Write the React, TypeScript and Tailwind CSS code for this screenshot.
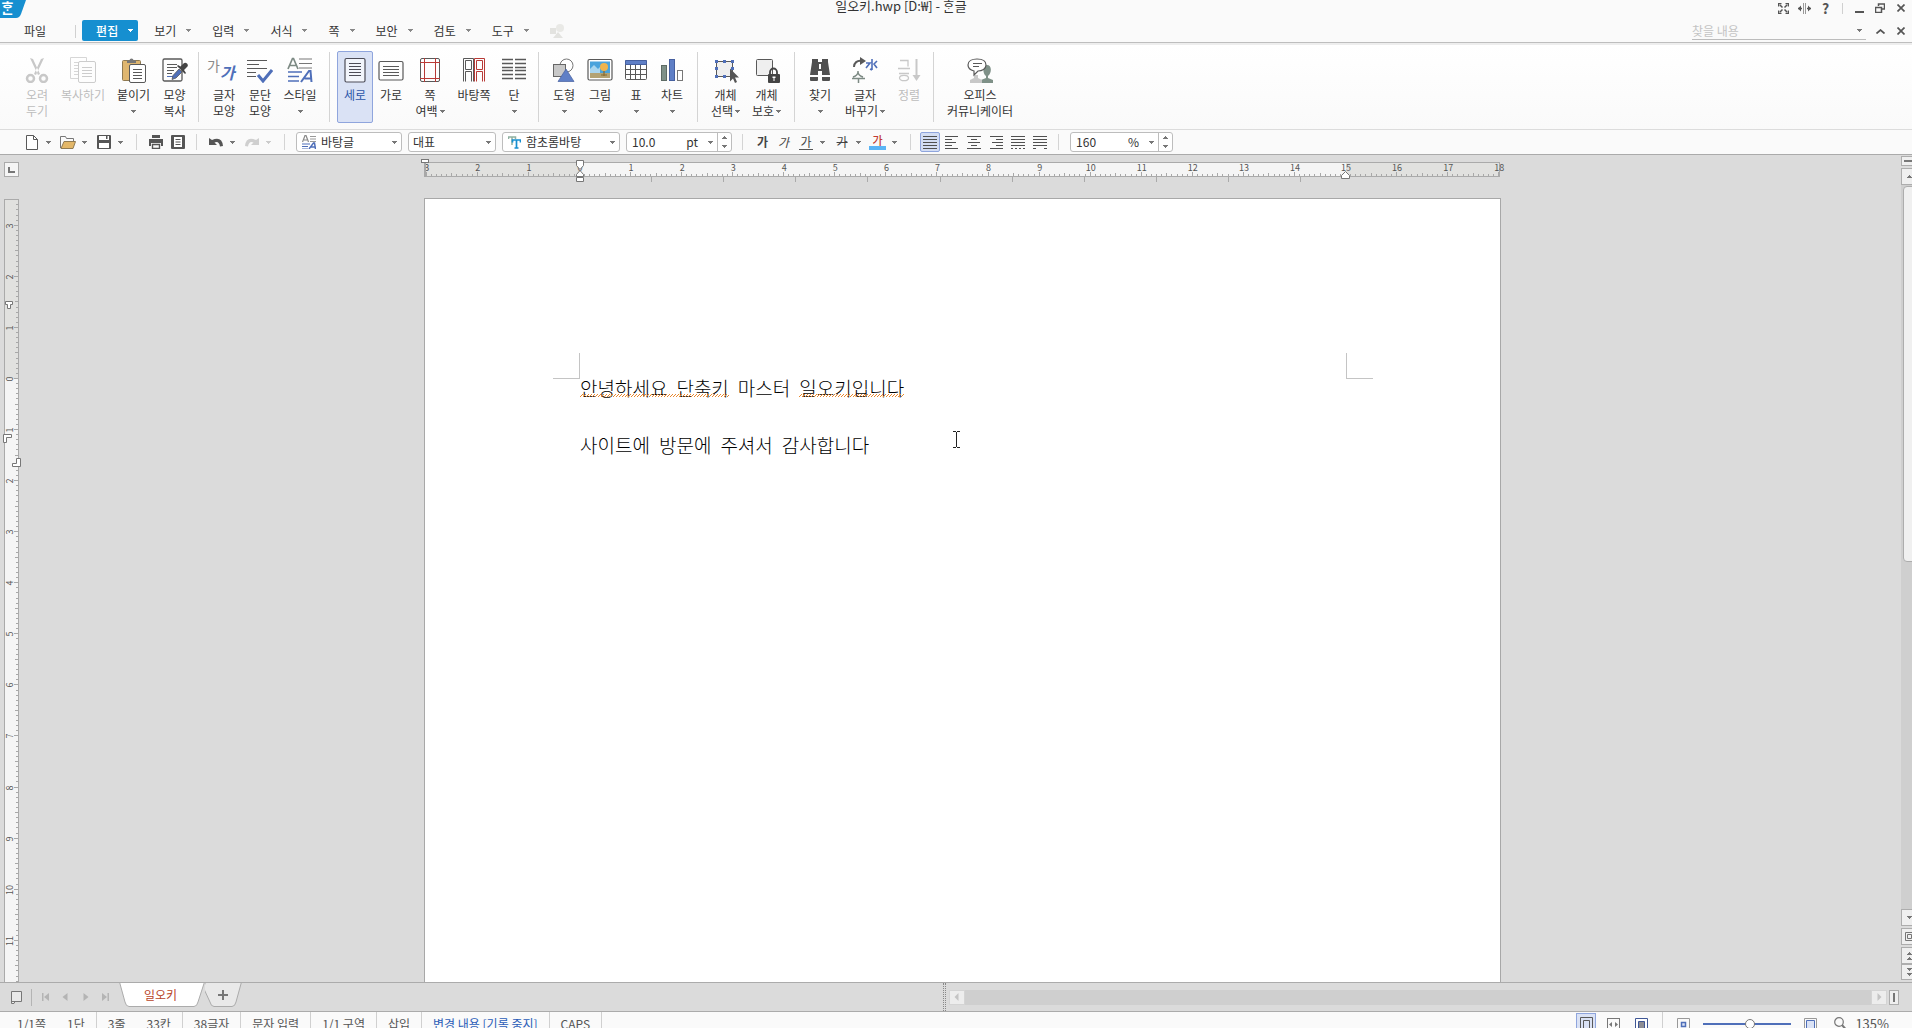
import React from "react";

type IconProps = { children: React.ReactNode; w?: number; h?: number; className?: string };

function Svg({ children, w = 26, h = 26, className = "" }: IconProps) {
  return (
    <svg
      width={w}
      height={h}
      viewBox={`0 0 ${w} ${h}`}
      fill="none"
      aria-hidden="true"
      className={`block shrink-0 ${className}`}
    >
      {children}
    </svg>
  );
}

function Caret({ className = "text-[#777777]" }: { className?: string }) {
  return (
    <svg width="5" height="3" viewBox="0 0 5 3" aria-hidden="true" className={`block shrink-0 ${className}`} shapeRendering="crispEdges">
      <path d="M0 0h5v1H0zM1 1h3v1H1zM2 2h1v1H2z" fill="currentColor" />
    </svg>
  );
}

function CaretUp() {
  return (
    <svg width="5" height="3" viewBox="0 0 5 3" aria-hidden="true" className="block shrink-0 text-[#777777]" shapeRendering="crispEdges">
      <path d="M2 0h1v1H2zM1 1h3v1H1zM0 2h5v1H0z" fill="currentColor" />
    </svg>
  );
}

const G = "#595959";
const B = "#4f6fb9";
const R = "#b83a36";
const L = "#c8c8c8";

const icons = {
  cut: (
    <Svg>
      <path d="M6 1l3 1 7 15-2 1zM20 1l-3 1-7 15 2 1z" fill={L} />
      <circle cx="6.500" cy="21.500" r="3.500" stroke={L} strokeWidth="2.500" />
      <circle cx="19.500" cy="21.500" r="3.500" stroke={L} strokeWidth="2.500" />
    </Svg>
  ),
  copy: (
    <Svg>
      <path d="M8 21.500H.5V.5h16V4" stroke="#d6d6d6" />
      <path d="M4 5.500h5M4 8.500h4M4 11.500h4M4 14.500h4M4 17.500h4" stroke="#d6d6d6" />
      <rect x="8.500" y="4.500" width="17" height="21" rx="1.500" stroke="#cccccc" fill="#fdfdfd" />
      <path d="M12 10.500h10M12 13.500h10M12 16.500h10M12 19.500h10" stroke="#cccccc" />
    </Svg>
  ),
  paste: (
    <Svg>
      <rect x="1.500" y="3.500" width="18" height="20" rx="1" fill="#dfb66f" stroke="#8f7a52" />
      <path d="M6 6V3.500h2.500a2 2 0 0 1 4 0H15V6z" fill="#777" />
      <rect x="8.500" y="7.500" width="16" height="18" rx="1.500" fill="#fff" stroke={G} />
      <path d="M12 12.500h9M12 15.500h9M12 18.500h9M12 21.500h9" stroke={G} />
    </Svg>
  ),
  format: (
    <Svg>
      <rect x="1" y="2" width="19" height="22" rx="1.500" stroke={G} strokeWidth="1.300" />
      <path d="M5 7.500h10M5 10.500h10M5 13.500h7M5 16.500h5" stroke={G} />
      <path d="M5 19.500h6" stroke={B} />
      <path d="M17 12l3 3-6 6-4 1.500 1-4z" fill={B} stroke={G} strokeWidth=".8" />
      <path d="M15 9l8 8 1-1-2-3 3-3a2.300 2.300 0 0 0-3.500-3.500l-3 3-2.500-1.500z" fill="#444" />
    </Svg>
  ),
  para: (
    <Svg>
      <path d="M0 3.500h20M0 7.500h12M0 11.500h20M0 15.500h9M0 19.500h9" stroke={G} strokeWidth="1.200" />
      <path d="M11 18l5 6 9-11" stroke={B} strokeWidth="3" />
    </Svg>
  ),
  style: (
    <Svg>
      <path d="M1 12L5.500 1.500h1L11 12M3 8.500h6" stroke="#7d8a84" strokeWidth="1.700" />
      <path d="M12 2h13M12 6.500h13M12 11h13" stroke="#777" strokeWidth="1.200" />
      <path d="M1 15h14M1 19.500h11M1 24h11" stroke={B} strokeWidth="1.300" />
      <path d="M14 25l8-11h1.500l1 11M17.500 21.500h7" stroke={B} strokeWidth="2" />
    </Svg>
  ),
  portrait: (
    <Svg>
      <rect x="3" y="1.500" width="20" height="23.500" rx="1.500" stroke="#4d4d58" strokeWidth="1.200" fill="#f2f5fc" />
      <path d="M7 6.500h12M7 9.500h12M7 12.500h12M7 15.500h12M7 18.500h12" stroke="#4d4d58" />
    </Svg>
  ),
  landscape: (
    <Svg>
      <rect x="1" y="4.500" width="24" height="18.500" rx="1.500" stroke={G} strokeWidth="1.200" />
      <path d="M5 9.500h16M5 12.500h16M5 15.500h16M5 18.500h16" stroke={G} />
    </Svg>
  ),
  margin: (
    <Svg>
      <rect x="3.500" y="1.500" width="19" height="23" rx="1.500" stroke={G} />
      <path d="M7.500 1v24M18.500 1v24M3 5.500h20M3 21.500h20" stroke={R} />
    </Svg>
  ),
  master: (
    <Svg>
      <path d="M2.500 24.500V1.500h10v23M4.500 3.500h6v9h-6zM4.500 24.500v-10h6v10" stroke={G} />
      <path d="M13.500 24.500V1.500h10v23M15.500 3.500h6v9h-6zM15.500 24.500v-10h6v10" stroke={R} />
    </Svg>
  ),
  columns: (
    <Svg>
      <path
        d="M1 2.500h11M1 6.500h11M1 10.500h11M1 13.500h11M1 17.500h11M1 21.500h11M14 2.500h11M14 6.500h11M14 10.500h11M14 13.500h11M14 17.500h11M14 21.500h11"
        stroke={G}
        strokeWidth="1.300"
      />
    </Svg>
  ),
  shapes: (
    <Svg>
      <circle cx="15.500" cy="8.500" r="6.500" stroke="#777" fill="#fff" />
      <rect x="2.500" y="7.500" width="12" height="12" fill="#c8c8c8" stroke="#666" />
      <path d="M15 12l8 12.500H7z" fill="#5f7fc6" stroke="#46609f" strokeWidth=".7" />
    </Svg>
  ),
  picture: (
    <Svg>
      <rect x="1" y="2.500" width="24" height="20.500" rx="1.500" fill="#fff" stroke={G} strokeWidth="1.200" />
      <path d="M3 4.500h20v12H3z" fill="#4aa3dc" />
      <path d="M3 12l4-4 4 4 2-2v7H3z" fill="#a9d5ee" />
      <path d="M3 16h20v5H3z" fill="#b3a273" />
      <circle cx="17" cy="10" r="4" fill="#f0b44c" />
      <path d="M17 14v5M14 18h6" stroke="#8a6a2a" strokeWidth="1.200" />
    </Svg>
  ),
  table: (
    <Svg>
      <rect x="2.500" y="3.500" width="21" height="19" rx="1" fill="#fff" stroke={G} />
      <path d="M2.500 3.500h21v4h-21z" fill="#5f7fc6" stroke="#46609f" />
      <path d="M2 12.500h22M2 17.500h22M7.500 8v14M12.500 8v14M17.500 8v14" stroke={G} />
    </Svg>
  ),
  chart: (
    <Svg>
      <rect x="2.500" y="8.500" width="5" height="15" fill="#7f9188" stroke="#5e6b64" />
      <rect x="10.500" y="2.500" width="5" height="21" fill="#5f7fc6" stroke="#46609f" />
      <rect x="18.500" y="13.500" width="5" height="10" fill="#fff" stroke="#777" />
    </Svg>
  ),
  select: (
    <Svg>
      <rect x="3.500" y="4.500" width="16" height="15" fill="#efefef" stroke={G} />
      <path d="M2 3h3v3H2zM10 3h3v3h-3zM18 3h3v3h-3zM2 10h3v3H2zM2 18h3v3H2zM10 18h3v3h-3zM18 10h3v3h-3z" fill={B} />
      <path d="M17 11.500v13l3-3 2 4.500 2-1-2-4.500h4z" fill="#555" />
    </Svg>
  ),
  protect: (
    <Svg>
      <rect x="2.500" y="2.500" width="16" height="16" rx="1" fill="#efefef" stroke={G} />
      <path d="M16 17v-2a3.500 3.500 0 0 1 7 0v2" stroke="#444" strokeWidth="1.800" />
      <rect x="14" y="17" width="12" height="9" rx="1" fill="#444" />
      <path d="M18.500 19.500h3v1.500h-1v3h-1v-3h-1z" fill="#fff" />
    </Svg>
  ),
  find: (
    <Svg>
      <path d="M5 2h6v3h4V2h6v3l2 13h-8v-4h-4v4H3L5 5z" fill="#505050" />
      <path d="M3 20h8v3a1 1 0 0 1-1 1H4a1 1 0 0 1-1-1zM15 20h8v3a1 1 0 0 1-1 1h-6a1 1 0 0 1-1-1z" fill="#505050" />
      <path d="M12 7h2v5h-2z" fill="#fff" />
    </Svg>
  ),
  replace: (
    <Svg>
      <path d="M2 10c0-4 3-7 8-6" stroke={G} strokeWidth="2" />
      <path d="M8 0l6 4-6 4z" fill={G} />
      <path d="M20 2v11M14 6h4l-4 5M25 4l-3 3 3 4M20 13l-2-1" stroke={B} strokeWidth="1.600" />
      <path d="M6 14v1c0 2-2 4-5 5M6 15c0 2 2 4 5 5M0 21.500h13M6.500 21v5" stroke="#7d8a84" strokeWidth="1.500" />
    </Svg>
  ),
  sort: (
    <Svg>
      <path d="M4 3.500h8v6M2 11.500h12M3 16.500h10" stroke={L} strokeWidth="1.300" />
      <ellipse cx="8" cy="21" rx="4.500" ry="2.700" stroke={L} strokeWidth="1.300" />
      <path d="M20.500 2v17" stroke={L} strokeWidth="2" />
      <path d="M16.500 18h8l-4 6z" fill={L} />
    </Svg>
  ),
  office: (
    <Svg>
      <path d="M14 26v-3l5-2v-2c-4-3-3-11 1-11 5 0 5 8 1 11v2l5 2v3z" fill="#7f9188" />
      <path d="M3 26v-3l4-2v-3h4v3l4 2v3z" fill={L} />
      <path d="M10 2c5 0 9 2 9 6s-4 6-8 6l-4 4v-4c-4-1-6-3-6-6 0-4 4-6 9-6z" fill="#fff" stroke={G} strokeWidth="1.200" />
      <path d="M6 6.500h9M6 9.500h6" stroke={G} />
    </Svg>
  ),
};

type RibbonItem = {
  icon: React.ReactNode;
  lines: string[];
  width: string;
  arrow?: boolean;
  disabled?: boolean;
  active?: boolean;
};

const letterIcon = (
  <span className="relative block h-[26px] w-[26px]" aria-hidden="true">
    <span className="absolute -left-1 top-0 text-[14px] leading-4 text-[#8a8a8a]">가</span>
    <span className="absolute left-[9px] top-[7px] text-[16px] font-bold italic leading-4 text-[#4f6fb9]">가</span>
  </span>
);

const ribbon: RibbonItem[][] = [
  [
    { icon: icons.cut, lines: ["오려", "두기"], width: "w-10", disabled: true },
    { icon: icons.copy, lines: ["복사하기"], width: "w-[52px]", disabled: true },
    { icon: icons.paste, lines: ["붙이기"], width: "w-[49px]", arrow: true },
    { icon: icons.format, lines: ["모양", "복사"], width: "w-[33px]" },
  ],
  [
    { icon: letterIcon, lines: ["글자", "모양"], width: "w-9" },
    { icon: icons.para, lines: ["문단", "모양"], width: "w-9" },
    { icon: icons.style, lines: ["스타일"], width: "w-11", arrow: true },
  ],
  [
    { icon: icons.portrait, lines: ["세로"], width: "w-9", active: true },
    { icon: icons.landscape, lines: ["가로"], width: "w-9" },
    { icon: icons.margin, lines: ["쪽", "여백"], width: "w-[42px]", arrow: true },
    { icon: icons.master, lines: ["바탕쪽"], width: "w-[46px]" },
    { icon: icons.columns, lines: ["단"], width: "w-[34px]", arrow: true },
  ],
  [
    { icon: icons.shapes, lines: ["도형"], width: "w-9", arrow: true },
    { icon: icons.picture, lines: ["그림"], width: "w-9", arrow: true },
    { icon: icons.table, lines: ["표"], width: "w-9", arrow: true },
    { icon: icons.chart, lines: ["차트"], width: "w-9", arrow: true },
  ],
  [
    { icon: icons.select, lines: ["개체", "선택"], width: "w-[41px]", arrow: true },
    { icon: icons.protect, lines: ["개체", "보호"], width: "w-[41px]", arrow: true },
  ],
  [
    { icon: icons.find, lines: ["찾기"], width: "w-9", arrow: true },
    { icon: icons.replace, lines: ["글자", "바꾸기"], width: "w-[54px]", arrow: true },
    { icon: icons.sort, lines: ["정렬"], width: "w-[34px]", disabled: true },
  ],
  [{ icon: icons.office, lines: ["오피스", "커뮤니케이터"], width: "w-[78px]" }],
];

function RibbonButton({ item }: { item: RibbonItem }) {
  const tone = item.disabled ? "text-[#bdbdbd]" : item.active ? "text-[#2a55a8]" : "text-[#333333]";
  const frame = item.active ? "border-[#8fa5dd] bg-[#dae2f5]" : "border-transparent";
  return (
    <button
      type="button"
      disabled={item.disabled}
      className={`flex h-[72px] shrink-0 flex-col items-center rounded-[2px] border pt-[5px] text-xs leading-4 whitespace-nowrap ${item.width} ${tone} ${frame}`}
    >
      {item.icon}
      <span className="mt-1">{item.lines[0]}</span>
      <span className="flex h-4 items-center gap-[2px]">
        {item.lines[1] && <span>{item.lines[1]}</span>}
        {item.arrow && <Caret />}
      </span>
    </button>
  );
}

function TitleBar() {
  return (
    <div className="flex h-5 shrink-0 items-start">
      <div className="relative flex h-[18px] w-[26px] shrink-0 items-start">
        <svg width="26" height="18" viewBox="0 0 26 18" aria-hidden="true" className="absolute inset-0">
          <path d="M0 0h26l-5 14q-1.500 4-5 4H0z" fill="#168fd0" />
        </svg>
        <span className="relative ml-px text-[14px] font-bold leading-[14px] text-white">ᄒᆞᆫ</span>
      </div>
      <h1 className="flex-1 pr-[2px] text-center text-[13px] leading-3 text-[#333333]">일오키.hwp [D:₩] - ᄒᆞᆫ글</h1>
      <div className="flex h-4 items-center pr-[7px] text-[#555555]">
        <button type="button" aria-label="전체 화면" className="mr-[9px]">
          <Svg w={11} h={11}>
            <path d="M.5 3.500v-3h3M7.500.5h3v3M10.500 7.500v3h-3M3.500 10.500h-3v-3M2 2l2.500 2.500M9 2L6.500 4.500M2 9l2.500-2.500M9 9L6.500 6.500" stroke="currentColor" strokeWidth="1.500" />
          </Svg>
        </button>
        <button type="button" aria-label="창 나누기" className="mr-[10px]">
          <Svg w={13} h={11}>
            <path d="M5.500 0v11M7.500 0v11" stroke="#999" />
            <path d="M0 5.500h4M9 5.500h4" stroke="currentColor" strokeWidth="1.500" />
            <path d="M3 2.500L0 5.500l3 3zM10 2.500l3 3-3 3z" fill="currentColor" />
          </Svg>
        </button>
        <button type="button" aria-label="도움말" className="w-[9px] text-[14px] font-bold leading-[14px]">?</button>
        <span className="mx-3 h-[11px] w-px bg-[#d0d0d0]" />
        <button type="button" aria-label="최소화" className="mr-[11px]">
          <Svg w={9} h={11}><path d="M0 9h9" stroke="currentColor" strokeWidth="2" /></Svg>
        </button>
        <button type="button" aria-label="이전 크기로" className="mr-3">
          <Svg w={10} h={10}>
            <path d="M3.500 3V1h6v5H7" stroke="currentColor" strokeWidth="1.500" />
            <path d="M.5 4.500h6v5h-6z" stroke="currentColor" strokeWidth="1.500" />
          </Svg>
        </button>
        <CloseButton />
      </div>
    </div>
  );
}

function CloseButton() {
  return (
    <button type="button" aria-label="닫기">
      <Svg w={8} h={8}><path d="M.5.5l7 7M7.500.5l-7 7" stroke="#555" strokeWidth="1.700" /></Svg>
    </button>
  );
}

const menus = ["편집", "보기", "입력", "서식", "쪽", "보안", "검토", "도구"];

function MenuBar() {
  return (
    <div className="flex h-[22px] shrink-0 items-center pr-[7px] text-xs text-[#333333]">
      <button type="button" className="ml-6 h-[21px] self-start">파일</button>
      <span className="ml-[29px] mr-[6px] h-[13px] w-px bg-[#d0d0d0]" />
      <nav className="flex h-full gap-[2px]">
        {menus.map((m, i) => (
          <button
            key={m}
            type="button"
            className={
              i === 0
                ? "flex h-[21px] items-center gap-[10px] rounded-[2px] bg-[#168fd0] pl-[14px] pr-[5px] font-medium text-white"
                : "flex h-[21px] items-center gap-[10px] pl-[14px] pr-[5px]"
            }
          >
            {m}
            <Caret className={i === 0 ? "text-white" : "text-[#888888]"} />
          </button>
        ))}
      </nav>
      <Svg w={14} h={14} className="ml-4">
        <path d="M0 4h6v6H0zM8 8l5 6H3z" fill="#e3e3e0" />
        <circle cx="10" cy="4" r="4" fill="#e9e9e6" />
      </Svg>
      <label className="ml-auto flex h-[18px] w-[174px] items-center border-b border-[#bcbcbc]">
        <input aria-label="찾을 내용" placeholder="찾을 내용" className="min-w-0 flex-1 bg-transparent text-xs outline-none placeholder:text-[#c4c4c4]" />
        <span className="mr-1"><Caret /></span>
      </label>
      <button type="button" aria-label="리본 접기" className="ml-[10px] mr-3">
        <Svg w={9} h={5}><path d="M.5 4.500l4-3.500 4 3.500" stroke="#555" strokeWidth="1.700" /></Svg>
      </button>
      <CloseButton />
    </div>
  );
}

function Sep({ className }: { className: string }) {
  return <span className={`h-4 w-px shrink-0 bg-[#d4d4d4] ${className}`} />;
}

function ToolButton({ label, children, className = "" }: { label: string; children: React.ReactNode; className?: string }) {
  return (
    <button type="button" aria-label={label} className={`flex h-[19px] shrink-0 items-center ${className}`}>
      {children}
    </button>
  );
}

function Combo({ label, value, width, pad, icon }: { label: string; value: string; width: string; pad: string; icon?: React.ReactNode }) {
  return (
    <div className={`relative mr-[6px] flex h-5 shrink-0 items-center rounded-[3px] border border-[#bdbdbd] bg-white ${width}`}>
      {icon && <span className="absolute left-[5px]">{icon}</span>}
      <select aria-label={label} defaultValue={value} className={`h-full w-full appearance-none bg-transparent text-xs leading-4 outline-none ${pad}`}>
        <option>{value}</option>
      </select>
      <span className="pointer-events-none absolute right-1"><Caret /></span>
    </div>
  );
}

function NumberBox({ label, value, unit, width, gap }: { label: string; value: string; unit: string; width: string; gap: string }) {
  return (
    <div className={`flex h-5 shrink-0 items-center rounded-[3px] border border-[#bdbdbd] bg-white text-xs ${width}`}>
      <input aria-label={label} defaultValue={value} className="min-w-0 flex-1 bg-transparent pl-[5px] outline-none" />
      <span>{unit}</span>
      <span className={gap}><Caret /></span>
      <span className="flex h-full w-[14px] flex-col items-center justify-center gap-[6px] border-l border-[#bdbdbd]">
        <button type="button" aria-label={`${label} 늘리기`}><CaretUp /></button>
        <button type="button" aria-label={`${label} 줄이기`}><Caret /></button>
      </span>
    </div>
  );
}

const alignments: { label: string; d: string }[] = [
  { label: "양쪽 정렬", d: "M0 .5h14M0 3.500h14M0 6.500h14M0 9.500h14M0 12.500h14" },
  { label: "왼쪽 정렬", d: "M0 .5h13M0 3.500h7M0 6.500h11M0 9.500h7M0 12.500h13" },
  { label: "가운데 정렬", d: "M0 .5h14M4 3.500h6M1 6.500h12M4 9.500h6M0 12.500h14" },
  { label: "오른쪽 정렬", d: "M1 .5h13M7 3.500h7M3 6.500h11M7 9.500h7M1 12.500h13" },
  { label: "배분 정렬", d: "M0 .5h14M0 3.500h14M0 6.500h14M0 9.500h14M0 12.500h2M4 12.500h2M8 12.500h2M12 12.500h2" },
  { label: "나눔 정렬", d: "M0 .5h14M0 3.500h14M0 6.500h14M0 9.500h14M0 12.500h3M11 12.500h3" },
];

function Toolbar() {
  return (
    <div className="flex h-6 shrink-0 items-center overflow-hidden bg-[#fafafa] text-xs text-[#333333]">
      <ToolButton label="새 문서" className="ml-[26px] gap-2">
        <Svg w={12} h={15}><path d="M.5.5h7l4 4v10H.5z" fill="#fff" stroke={G} /><path d="M7.500.5v4h4" stroke={G} /></Svg>
        <Caret />
      </ToolButton>
      <ToolButton label="불러오기" className="ml-[9px] gap-[6px]">
        <Svg w={16} h={13}>
          <path d="M.5 12V.5h5l1 2h7V6" stroke="#777" />
          <path d="M4 5.500h11.500L13 12.500H1z" fill="#e3b768" stroke="#8f7a52" />
        </Svg>
        <Caret />
      </ToolButton>
      <ToolButton label="저장하기" className="ml-[10px] gap-[7px]">
        <Svg w={14} h={14}>
          <rect width="14" height="14" rx="1" fill="#555" />
          <path d="M2 1h10v4H2zM2 8h10v5H2z" fill="#fff" />
          <path d="M9 1h1.500v3H9z" fill="#555" />
        </Svg>
        <Caret />
      </ToolButton>
      <Sep className="ml-[13px] mr-3" />
      <ToolButton label="인쇄">
        <Svg w={14} h={14}>
          <path d="M3 0h8v3H3zM0 4h14v7h-2V8H2v3H0z" fill="#555" />
          <path d="M3.500 9.500h7v4h-7z" stroke="#555" strokeWidth="1.400" />
        </Svg>
      </ToolButton>
      <ToolButton label="미리 보기" className="ml-2">
        <Svg w={14} h={14}>
          <rect width="14" height="14" rx="1" fill="#555" />
          <path d="M3 2h8v10H3z" fill="#fff" />
          <path d="M4.500 4.500h5M4.500 7h5M4.500 9.500h5" stroke="#555" />
        </Svg>
      </ToolButton>
      <Sep className="ml-[11px] mr-3" />
      <ToolButton label="되돌리기" className="gap-[7px]">
        <Svg w={14} h={10}><path d="M0 1v7h8L5.500 5.500Q10 3.500 11 9.500l3-.5Q13-1 3 3z" fill="#555" /></Svg>
        <Caret />
      </ToolButton>
      <ToolButton label="다시 실행" className="ml-[10px] gap-[7px]">
        <Svg w={14} h={10}><path d="M14 1v7H6l2.500-2.500Q4 3.500 3 9.500L0 9Q1-1 11 3z" fill="#cfcfcf" /></Svg>
        <Caret className="text-[#cccccc]" />
      </ToolButton>
      <Sep className="ml-[13px] mr-[11px]" />
      <Combo
        label="스타일"
        value="바탕글"
        width="w-[106px]"
        pad="pl-6"
        icon={
          <Svg w={14} h={14}>
            <path d="M.5 7L3 .5h1L6.500 7M2 5h3" stroke="#888" strokeWidth="1.200" />
            <path d="M8 1.500h6M8 4h6M8 6.500h6" stroke="#999" />
            <path d="M0 9h8M0 11.500h6M0 14h6" stroke={B} />
            <path d="M7 14l4.500-6h1l1 6M9 12h4.500" stroke={B} strokeWidth="1.500" />
          </Svg>
        }
      />
      <Combo label="언어" value="대표" width="w-[88px]" pad="pl-1" />
      <Combo
        label="글꼴"
        value="함초롬바탕"
        width="w-[118px]"
        pad="pl-[23px]"
        icon={
          <Svg w={13} h={13}>
            <path d="M.5 3V1h7v2M4 1v8" stroke="#8fb0a0" strokeWidth="1.500" />
            <path d="M4.500 6.500V4h8v2.500M8.500 4v8M6.500 12h4" stroke="#168fd0" strokeWidth="1.700" />
          </Svg>
        }
      />
      <NumberBox label="글자 크기" value="10.0" unit="pt" width="w-[106px]" gap="ml-[10px] mr-1" />
      <Sep className="ml-[10px] mr-[14px]" />
      <ToolButton label="진하게" className="font-bold text-[#444444]">가</ToolButton>
      <ToolButton label="기울임" className="ml-[10px] italic text-[#444444]">가</ToolButton>
      <ToolButton label="밑줄" className="ml-[10px] gap-[7px] text-[#444444]">
        <span className="flex h-4 w-[14px] items-center justify-center border-b border-[#555555]">가</span>
        <Caret />
      </ToolButton>
      <ToolButton label="취소선" className="ml-[10px] gap-[7px] text-[#444444]">
        <span className="w-[14px] text-center line-through">가</span>
        <Caret />
      </ToolButton>
      <ToolButton label="글자 색" className="ml-[8px] gap-[6px]">
        <span className="flex h-4 w-[17px] items-center justify-center border-b-4 border-[#5ab4f5] text-[11px] font-medium leading-3 text-[#c23b33]">가</span>
        <Caret />
      </ToolButton>
      <Sep className="ml-[13px] mr-[9px]" />
      <div className="flex shrink-0 gap-[2px]">
        {alignments.map((a, i) => (
          <button
            key={a.label}
            type="button"
            aria-label={a.label}
            className={
              i === 0
                ? "flex h-5 w-5 items-center justify-center rounded-[2px] border border-[#8fa5dd] bg-[#d3ddf3]"
                : "flex h-5 w-5 items-center justify-center"
            }
          >
            <Svg w={14} h={13}><path d={a.d} stroke="#505050" /></Svg>
          </button>
        ))}
      </div>
      <Sep className="ml-2 mr-[11px]" />
      <NumberBox label="줄 간격" value="160" unit="%" width="w-[103px]" gap="ml-[10px] mr-1" />
    </div>
  );
}

const tick = (i: number) => (i % 10 === 0 ? 4 : i % 5 === 0 ? 3 : 2);

function HorizontalRuler() {
  const zero = 156;
  const unit = 51.07;
  const ticks = Array.from({ length: 181 + 30 }, (_, i) => i - 30);
  const labels = Array.from({ length: 22 }, (_, i) => i - 3);
  const tabs = Array.from({ length: 10 }, (_, i) => i + 1);
  return (
    <svg width="1077" height="26" viewBox="0 0 1077 26" role="img" aria-label="가로 눈금자" className="mt-[3px] block overflow-visible">
      <rect x=".5" y="4.500" width="1075" height="14" fill="#e1e1df" stroke="#aaaaaa" />
      <rect x="156" y="5" width="766" height="13" fill="#f5f5f5" />
      {ticks.map((i) => (
        <rect key={i} x={Math.round(zero + (i * unit) / 10) - 1} y={18 - tick(i)} width="1" height={tick(i)} fill="#a8a8a8" />
      ))}
      {tabs.map((i) => (
        <rect key={i} x={Math.round(zero + i * 72.1) - 1} y="19" width="1" height="5" fill="#aaaaaa" />
      ))}
      {labels.map((n) => (
        <text key={n} x={zero + n * unit} y="13" textAnchor="middle" fontSize="9" fill="#555555">
          {Math.abs(n)}
        </text>
      ))}
      <path d="M1 4v15" stroke="#a8a8a8" strokeWidth="2" />
      <g fill="#fff" stroke="#777777">
        <rect x="-2.500" y="1.500" width="7" height="3" />
        <path d="M152.500 2.500h7v5l-3.500 4-3.500-4zM156 12.500l3.500 4v2h-7v-2zM152.500 19.500h7v4h-7z" />
        <path d="M921.500 13.500l4 4v3h-8v-3z" />
      </g>
    </svg>
  );
}

function VerticalRuler() {
  const zero = 180;
  const unit = 51.07;
  const ticks = Array.from({ length: 236 }, (_, i) => i - 34);
  const labels = Array.from({ length: 23 }, (_, i) => i - 3);
  return (
    <div className="min-h-0 flex-1 overflow-hidden">
      <svg width="24" height="1500" viewBox="0 0 24 1500" role="img" aria-label="세로 눈금자" className="block">
        <rect x="4.500" y="1.500" width="14" height="1600" fill="#e1e1df" stroke="#aaaaaa" />
        <rect x="5" y="181" width="13" height="1500" fill="#f5f5f5" />
        {ticks.map((i) => (
          <rect key={i} x={18 - tick(i)} y={Math.round(zero + (i * unit) / 10)} width={tick(i)} height="1" fill="#a8a8a8" />
        ))}
        {labels.map((n) => (
          <text key={n} transform={`translate(13 ${Math.round(zero + n * unit) + 1}) rotate(-90)`} textAnchor="middle" fontSize="9" fill="#555555">
            {Math.abs(n)}
          </text>
        ))}
        <g fill="#fff" stroke="#777777">
          <path d="M5.500 103.500h7v3h-2v4h-3v-4h-2z" />
          <path d="M3.500 236.500h8v3h-5v5h-3z" />
          <path d="M12.500 265.500h4v-5h4v8h-8z" />
        </g>
      </svg>
    </div>
  );
}

function Squiggle({ children }: { children: React.ReactNode }) {
  return (
    <span className="relative flex gap-[9px]">
      {children}
      <svg aria-hidden="true" className="absolute left-0 top-[15px] h-[3px] w-full" shapeRendering="crispEdges">
        <defs>
          <pattern id="spelling" width="3" height="3" patternUnits="userSpaceOnUse">
            <path d="M2 0h1v1H2zM1 1h1v1H1zM0 2h1v1H0z" fill="#e8872e" />
          </pattern>
        </defs>
        <rect width="100%" height="3" fill="url(#spelling)" />
      </svg>
    </span>
  );
}

function Page() {
  return (
    <article className="relative mt-[14px] min-h-0 w-full flex-1 overflow-hidden border border-b-0 border-[#a8a8a8] bg-white pt-[154px]">
      <div className="flex justify-between pl-32 pr-[127px]" aria-hidden="true">
        <span className="h-[26px] w-[27px] border-b border-r border-[#c4c4c4]" />
        <span className="h-[26px] w-[27px] border-b border-l border-[#c4c4c4]" />
      </div>
      <div className="flex flex-col gap-[39px] px-[155px] text-[19px] font-light leading-[18px] text-black">
        <p className="flex gap-[9px]">
          <Squiggle>
            <span>안녕하세요</span>
            <span>단축키</span>
          </Squiggle>
          <span>마스터</span>
          <Squiggle>
            <span>일오키입니다</span>
          </Squiggle>
        </p>
        <p className="flex gap-[9px]">
          <span>사이트에</span>
          <span>방문에</span>
          <span>주셔서</span>
          <span>감사합니다</span>
        </p>
      </div>
      <svg width="7" height="17" viewBox="0 0 7 17" aria-hidden="true" className="absolute left-[528px] top-[232px]" shapeRendering="crispEdges">
        <path d="M0 0h3v1H0zM4 0h3v1H4zM3 1h1v15H3zM0 16h3v1H0zM4 16h3v1H4z" fill="#222" />
      </svg>
    </article>
  );
}

function ScrollButton({ label, height, children }: { label: string; height: string; children: React.ReactNode }) {
  return (
    <button type="button" aria-label={label} className={`flex w-4 shrink-0 flex-col items-center justify-center gap-[2px] border border-[#adadad] bg-[#efefef] ${height}`}>
      {children}
    </button>
  );
}

function VerticalScroll() {
  return (
    <div className="flex w-[11px] shrink-0 flex-col overflow-hidden pb-[2px] pt-px">
      <ScrollButton label="가로로 나누기" height="h-[10px]">
        <span className="h-[2px] w-[10px] bg-[#777777]" />
      </ScrollButton>
      <div className="mt-[2px] flex min-h-0 w-4 flex-1 flex-col bg-[#cfcfcf]">
        <ScrollButton label="위로" height="h-[17px]"><CaretUp /></ScrollButton>
        <div className="min-h-0 flex-1 pl-[2px] pt-px">
          <div className="h-[52%] rounded-[4px] border border-[#adadad] bg-[#f0f0f0]" />
        </div>
        <ScrollButton label="아래로" height="h-[17px]"><Caret /></ScrollButton>
      </div>
      <div className="mt-[2px] flex flex-col">
        <ScrollButton label="쪽 찾기" height="h-[17px]">
          <Svg w={9} h={9}><path d="M.5.5h8v8h-8zM2.500 2.500h4v4h-4z" stroke="#777" /></Svg>
        </ScrollButton>
      </div>
      <div className="mt-[2px] flex flex-col">
        <ScrollButton label="이전 쪽" height="h-[17px]"><CaretUp /><CaretUp /></ScrollButton>
        <ScrollButton label="다음 쪽" height="h-4"><Caret /><Caret /></ScrollButton>
      </div>
    </div>
  );
}

function Workspace() {
  return (
    <main className="flex min-h-0 flex-1 border-t border-[#aaaaaa] bg-[#dbdbdb]">
      <div className="flex w-6 shrink-0 flex-col pt-[7px]">
        <button type="button" aria-label="탭 종류" className="mb-[21px] ml-1 flex h-[15px] w-[15px] shrink-0 items-center justify-center border border-[#aaaaaa] bg-[#f5f5f5]">
          <Svg w={7} h={6}><path d="M1 0v5h6" stroke="#777" strokeWidth="2" /></Svg>
        </button>
        <VerticalRuler />
      </div>
      <div className="flex min-w-0 flex-1 justify-center">
        <div className="flex w-[1077px] shrink-0 flex-col">
          <HorizontalRuler />
          <Page />
        </div>
      </div>
      <VerticalScroll />
    </main>
  );
}

function NavButton({ label, d, className }: { label: string; d: string; className: string }) {
  return (
    <button type="button" aria-label={label} className={className}>
      <Svg w={7} h={8}><path d={d} fill="#b4b4b4" /></Svg>
    </button>
  );
}

function TabBar() {
  return (
    <div className="flex h-[30px] shrink-0 border-y border-[#ababab] bg-[#dbdbdb]">
      <div className="flex h-7 items-center">
        <button type="button" aria-label="문서 탭 목록" className="ml-[11px]">
          <Svg w={11} h={13}><path d="M.5.500h10v10H4l-1 2H.5z" fill="#e9e9e9" stroke="#777" /><path d="M.5 10.500H4" stroke="#777" /></Svg>
        </button>
        <span className="ml-[9px] h-[17px] w-px bg-[#b4b4b4]" />
        <NavButton label="처음 탭" className="ml-[10px]" d="M0 0h1.500v8H0zM7 0v8L2 4z" />
        <NavButton label="이전 탭" className="ml-[13px]" d="M5.500 0v8L.5 4z" />
        <NavButton label="다음 탭" className="ml-[13px]" d="M1.500 0v8l5-4z" />
        <NavButton label="마지막 탭" className="ml-[13px]" d="M5.500 0H7v8H5.500zM0 0v8l5-4z" />
      </div>
      <div className="ml-[10px] flex h-6 items-start">
        <button type="button" className="relative flex h-6 w-[86px] items-center justify-center pr-[3px] text-xs text-[#b8452a]">
          <svg width="86" height="24" viewBox="0 0 86 24" aria-hidden="true" className="absolute inset-0">
            <path d="M.5-1L6 19q1 4.500 4 4.500h65q3 0 4-4.500L85.500-1z" fill="#fff" stroke="#ababab" />
          </svg>
          <span className="relative">일오키</span>
        </button>
        <button type="button" aria-label="새 탭" className="relative h-6 w-9">
          <svg width="38" height="24" viewBox="0 0 38 24" aria-hidden="true" className="absolute inset-0">
            <path d="M.5-1h36L31 19q-1 4.500-4 4.500H9q-3 0-4-4.500L-1.500 5z" fill="#e9e9e9" stroke="#ababab" />
            <path d="M18 7v10M13 12h10" stroke="#777" strokeWidth="2" />
          </svg>
        </button>
      </div>
      <div className="ml-auto flex h-7 w-[50.7%] items-center pr-[13px]">
        <span className="h-7 w-[3px] border-x border-dotted border-[#888888]" />
        <div className="ml-[3px] flex h-[15px] min-w-0 flex-1 justify-between bg-[#cfcfcf]">
          <button type="button" aria-label="왼쪽으로" className="flex w-4 items-center justify-center border border-[#d4d4d4] bg-[#ededed]">
            <Svg w={5} h={8}><path d="M4.500 0v8L.5 4z" fill="#c4c4c4" /></Svg>
          </button>
          <button type="button" aria-label="오른쪽으로" className="flex w-4 items-center justify-center border border-[#d4d4d4] bg-[#ededed]">
            <Svg w={5} h={8}><path d="M.5 0v8l4-4z" fill="#c4c4c4" /></Svg>
          </button>
        </div>
        <button type="button" aria-label="세로로 나누기" className="ml-[2px] flex h-[15px] w-[10px] items-center justify-center border border-[#adadad] bg-[#efefef]">
          <span className="h-[9px] w-[2px] bg-[#777777]" />
        </button>
      </div>
    </div>
  );
}

function StatusBar() {
  const item = "flex h-full items-center border-r border-[#d0d0d0] px-[11px]";
  return (
    <footer className="h-4 shrink-0 overflow-hidden bg-[#fafafa] text-xs text-[#555555]">
      <div className="flex h-6 items-center whitespace-nowrap pr-[23px]">
        <span className="flex h-full items-center gap-[21px] border-r border-[#d0d0d0] pl-[17px] pr-[11px]">
          <span>1/1쪽</span>
          <span>1단</span>
        </span>
        <span className="flex h-full items-center gap-[21px] border-r border-[#d0d0d0] px-[11px]">
          <span>3줄</span>
          <span>33칸</span>
        </span>
        <span className={item}>38글자</span>
        <span className={item}>문자 입력</span>
        <span className={item}>1/1 구역</span>
        <span className={item}>삽입</span>
        <span className={`${item} text-[#2a5db8]`}>변경 내용 [기록 중지]</span>
        <span className={item}>CAPS</span>
        <div className="ml-auto flex h-full items-center">
          <button type="button" aria-label="쪽 윤곽" className="flex h-[22px] w-5 items-center justify-center border border-[#8fa5dd] bg-[#dae2f5]">
            <Svg w={13} h={14}><path d="M.5 13.500V.5h12v13M3.500 13.500v-10h6v10" stroke={G} /></Svg>
          </button>
          <button type="button" aria-label="폭 맞춤" className="ml-[11px]">
            <Svg w={13} h={13}>
              <path d="M3 .5H.5v12h12V.5H9" stroke="#777" />
              <path d="M0 .5h13" stroke="#777" />
              <path d="M5 4L2 6.500 5 9zM8 4l3 2.500L8 9z" fill="#777" />
            </Svg>
          </button>
          <button type="button" aria-label="쪽 맞춤" className="ml-[15px]">
            <Svg w={13} h={13}><path d="M.5.500h12v12H.5z" fill="#fff" stroke="#3f5796" /><path d="M3.500 3.500h6v9h-6z" fill="#8d8d94" stroke="#3f5796" /></Svg>
          </button>
          <span className="mx-[14px] h-full w-px bg-[#d0d0d0]" />
          <button type="button" aria-label="축소">
            <Svg w={13} h={13}><path d="M.5.500h12v12H.5z" stroke="#999" /><path d="M4.500 4.500h4v4h-4z" stroke={B} strokeWidth="1.500" fill="#dae2f5" /></Svg>
          </button>
          <input
            type="range"
            aria-label="확대 비율"
            min={0}
            max={100}
            defaultValue={54}
            className="mx-[13px] h-3 w-[88px] appearance-none bg-[linear-gradient(#4f6fb9,#4f6fb9)] bg-[length:100%_2px] bg-center bg-no-repeat [&::-webkit-slider-thumb]:h-[10px] [&::-webkit-slider-thumb]:w-[10px] [&::-webkit-slider-thumb]:appearance-none [&::-webkit-slider-thumb]:rounded-full [&::-webkit-slider-thumb]:border [&::-webkit-slider-thumb]:border-[#777777] [&::-webkit-slider-thumb]:bg-white"
          />
          <button type="button" aria-label="확대">
            <Svg w={13} h={13}><path d="M.5.500h12v12H.5z" stroke="#999" /><path d="M2.500 12.500v-10h8v10" stroke={B} fill="#dae2f5" /></Svg>
          </button>
          <button type="button" className="ml-[17px] flex items-center gap-[9px]">
            <Svg w={12} h={13}><circle cx="5" cy="5" r="4.300" stroke="#777" strokeWidth="1.200" /><path d="M8 8l4 4.500" stroke="#777" strokeWidth="2" /></Svg>
            <span className="text-[13px]">135%</span>
          </button>
        </div>
      </div>
    </footer>
  );
}

export default function App() {
  return (
    <div className="flex h-screen flex-col overflow-hidden bg-[#fafafa] font-['Noto_Sans_CJK_KR',sans-serif]">
      <TitleBar />
      <MenuBar />
      <div className="h-[3px] shrink-0 border-t border-[#bebebe] bg-[#eeeeee]" />
      <div className="flex h-[85px] shrink-0 items-start overflow-hidden border-b border-[#dcdcdc] bg-linear-to-b from-white to-[#fafafa] pl-[17px] pt-[6px]">
        {ribbon.map((group, gi) => (
          <React.Fragment key={gi}>
            {gi > 0 && <span className="mx-[7px] mt-px h-[70px] w-px shrink-0 bg-[#d4d4d4]" />}
            {group.map((item) => (
              <RibbonButton key={item.lines.join("")} item={item} />
            ))}
          </React.Fragment>
        ))}
      </div>
      <Toolbar />
      <Workspace />
      <TabBar />
      <StatusBar />
    </div>
  );
}
